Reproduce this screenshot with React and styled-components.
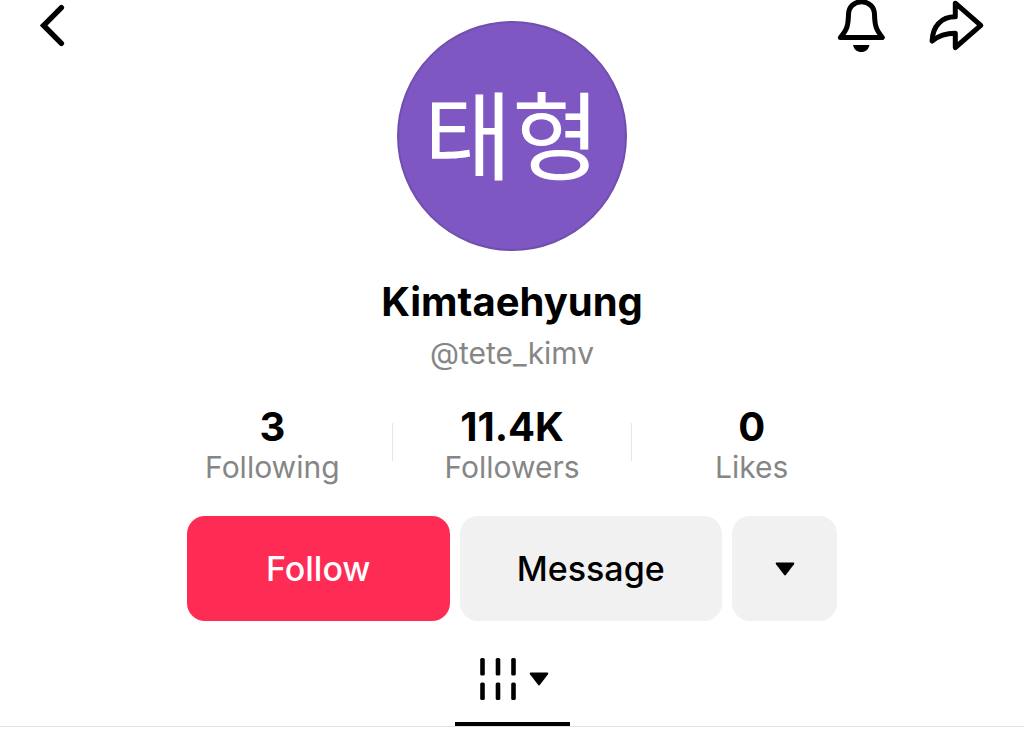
import styled, { createGlobalStyle } from "styled-components";

const GlobalStyle = createGlobalStyle`
  * {
    box-sizing: border-box;
  }

  body {
    margin: 0;
    background: #fff;
    color: #000;
    font-family: Inter, "Noto Sans CJK KR", sans-serif;
  }

  button {
    padding: 0;
    border: none;
    background: none;
    color: inherit;
    font: inherit;
    cursor: pointer;
  }

  svg {
    display: block;
  }
`;

const Header = styled.header`
  display: grid;
  grid-template-columns: 1fr auto 1fr;
  align-items: start;
  padding: 0 38px;
`;

const BackButton = styled.button`
  justify-self: start;
`;

const Actions = styled.div`
  display: flex;
  justify-content: flex-end;
  gap: 42px;
`;

const Avatar = styled.div`
  display: flex;
  align-items: center;
  justify-content: center;
  width: 230px;
  height: 230px;
  margin-top: 21px;
  padding-bottom: 10px;
  border: 2px solid #714fae;
  border-radius: 50%;
  background: #7e57c2;
  color: #fff;
  font-family: "Noto Sans CJK KR", sans-serif;
  font-size: 96px;
  line-height: 96px;
`;

const Profile = styled.main`
  display: flex;
  flex-direction: column;
  align-items: center;
  padding-top: 26px;
`;

const Name = styled.h1`
  margin: 0;
  font-size: 40px;
  font-weight: 700;
  line-height: 50px;
`;

const Handle = styled.p`
  margin: 6px 0 0;
  color: #868686;
  font-size: 30px;
  line-height: 40px;
`;

const Stats = styled.div`
  display: flex;
  width: 100%;
  max-width: 718px;
  margin-top: 33px;
`;

const Stat = styled.a`
  display: flex;
  flex: 1;
  flex-direction: column;
  align-items: center;
  color: inherit;
  text-decoration: none;

  strong {
    font-size: 40px;
    font-weight: 700;
    line-height: 42px;
  }

  span {
    color: #868686;
    font-size: 30px;
    line-height: 38px;
  }
`;

const Divider = styled.div`
  align-self: center;
  width: 1px;
  height: 38px;
  margin-bottom: 8px;
  background: #e6e6e6;
`;

const Buttons = styled.div`
  display: flex;
  gap: 10px;
  width: 100%;
  max-width: 650px;
  margin-top: 30px;
`;

const Button = styled.button`
  display: flex;
  flex: ${({ $square }) => ($square ? "0 0 105px" : "1")};
  align-items: center;
  justify-content: center;
  height: 105px;
  border-radius: 18px;
  background: ${({ $primary }) => ($primary ? "#fe2c55" : "#f1f1f1")};
  color: ${({ $primary }) => ($primary ? "#fff" : "#000")};
  font-size: 34px;
  font-weight: 500;
`;

const Tabs = styled.nav`
  display: flex;
  justify-content: center;
  width: 100%;
  margin-top: 25px;
  border-bottom: 1px solid #e3e3e4;
`;

const Tab = styled.button`
  display: flex;
  align-items: center;
  justify-content: center;
  gap: 12px;
  width: 115px;
  height: 80px;
  padding-top: 4px;
  padding-left: 3px;
  padding-bottom: 14px;
  border-bottom: 4px solid #000;
`;

const BackIcon = () => (
  <svg width="28" height="50" viewBox="0 0 28 50" fill="none" stroke="#000" strokeWidth="5.4">
    <path d="M23.4 7.6L5.6 25.5L23.4 43.4" strokeLinecap="round" />
  </svg>
);

const BellIcon = () => (
  <svg width="50" height="54" viewBox="0 0 50 54">
    <path
      d="M12.5 14.5C12.5 7 18 1.8 25.5 1.8S38.5 7 38.5 14.5C38.8 26 40 29.5 46.3 37.5H4.4C11 29.5 12.2 26 12.5 14.5Z"
      fill="none"
      stroke="#000"
      strokeWidth="5"
      strokeLinejoin="round"
    />
    <path d="M17 45H33.5C32.5 49.5 29.5 52 25.3 52S18 49.5 17 45Z" />
  </svg>
);

const ShareIcon = () => (
  <svg width="58" height="54" viewBox="0 0 58 54" fill="none">
    <path
      d="M27.3 3.2L52.8 25.4L27.3 47.5V33.3C17.5 33.3 10.5 35.8 4.1 41C4.6 26.5 13 16.8 27.3 16.8Z"
      stroke="#000"
      strokeWidth="5"
      strokeLinejoin="round"
    />
  </svg>
);

const CaretIcon = () => (
  <svg width="20" height="14" viewBox="0 0 20 14">
    <path d="M1.5 0.5H18.5Q20 0.8 19 2.2L11 12.8Q10 14 9 12.8L1 2.2Q0 0.8 1.5 0.5Z" />
  </svg>
);

const GridIcon = () => (
  <svg width="38" height="42" viewBox="0 0 38 42">
    {[1.2, 16.7, 32.2].map((x) => (
      <g key={x}>
        <rect x={x} y="0" width="4.6" height="17.6" rx="1.6" />
        <rect x={x} y="24.4" width="4.6" height="17.6" rx="1.6" />
      </g>
    ))}
  </svg>
);

const App = () => {
  return (
    <>
      <GlobalStyle />
      <Header>
        <BackButton aria-label="Back">
          <BackIcon />
        </BackButton>
        <Avatar>태형</Avatar>
        <Actions>
          <button aria-label="Notifications">
            <BellIcon />
          </button>
          <button aria-label="Share">
            <ShareIcon />
          </button>
        </Actions>
      </Header>
      <Profile>
        <Name>Kimtaehyung</Name>
        <Handle>@tete_kimv</Handle>
        <Stats>
          <Stat href="#following">
            <strong>3</strong>
            <span>Following</span>
          </Stat>
          <Divider />
          <Stat href="#followers">
            <strong>11.4K</strong>
            <span>Followers</span>
          </Stat>
          <Divider />
          <Stat href="#likes">
            <strong>0</strong>
            <span>Likes</span>
          </Stat>
        </Stats>
        <Buttons>
          <Button $primary>Follow</Button>
          <Button>Message</Button>
          <Button $square aria-label="More">
            <CaretIcon />
          </Button>
        </Buttons>
        <Tabs>
          <Tab aria-label="Videos">
            <GridIcon />
            <CaretIcon />
          </Tab>
        </Tabs>
      </Profile>
    </>
  );
};

export default App;
